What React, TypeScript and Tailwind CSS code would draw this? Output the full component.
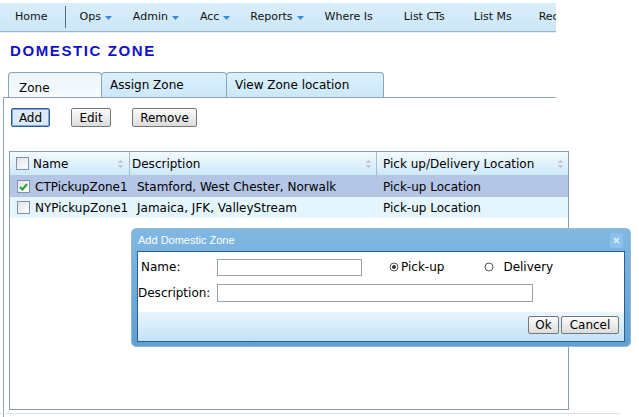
import React from 'react';

// ----------------------------------------------------------------------------
// Small drawings
// ----------------------------------------------------------------------------

const Caret = () => (
  <svg width="7" height="4" viewBox="0 0 7 4" className="ml-[4px] mt-[2px] shrink-0">
    <path d="M0 0 H7 L3.5 4 Z" fill="#3a8bd0" />
  </svg>
);

const SortIcon = () => (
  <svg width="7" height="10" viewBox="0 0 7 10" className="shrink-0">
    <path d="M3.5 0.5 L6.5 4 H0.5 Z" fill="#c3ccd5" />
    <path d="M3.5 9.5 L6.5 6 H0.5 Z" fill="#c3ccd5" />
  </svg>
);

const CheckBox = ({ checked }: { checked?: boolean }) => (
  <span className="flex h-[13px] w-[13px] shrink-0 items-center justify-center border border-[#7b94ad] bg-gradient-to-br from-[#dfe2e7] to-white">
    {checked && (
      <svg width="9" height="8" viewBox="0 0 9 8">
        <path d="M1 4 L3.5 6.5 L8 1.2" stroke="#22a122" strokeWidth="2" fill="none" />
      </svg>
    )}
  </span>
);

const Radio = ({ checked }: { checked?: boolean }) => (
  <svg width="10" height="10" viewBox="0 0 10 10" className="shrink-0">
    <circle cx="5" cy="5" r="4" fill="#fff" stroke="#555" strokeWidth="1" />
    {checked && <circle cx="5" cy="5" r="2" fill="#333" />}
  </svg>
);

// ----------------------------------------------------------------------------
// Menu bar
// ----------------------------------------------------------------------------

const navItems = [
  { label: 'Ops', caret: true, ml: 'ml-[13px]' },
  { label: 'Admin', caret: true, ml: 'ml-[21px]' },
  { label: 'Acc', caret: true, ml: 'ml-[21px]' },
  { label: 'Reports', caret: true, ml: 'ml-[20px]' },
  { label: 'Where Is', caret: false, ml: 'ml-[21px]' },
  { label: 'List CTs', caret: false, ml: 'ml-[31px]' },
  { label: 'List Ms', caret: false, ml: 'ml-[29px]' },
  { label: 'Rec', caret: false, ml: 'ml-[27px]' },
];

const NavBar = () => (
  <div className="mt-[3px] w-[556px] shrink-0">
    <div className="flex h-[29px] items-center overflow-hidden whitespace-nowrap border-b border-[#9db4c7] bg-gradient-to-b from-[#d9eefb] to-[#cbe7f8] pl-[15px] text-[11px] text-[#111]">
      <span>Home</span>
      <span className="ml-[18px] h-[22px] w-px shrink-0 bg-[#5b6976]" />
      {navItems.map((item) => (
        <span key={item.label} className={`flex shrink-0 items-center ${item.ml}`}>
          {item.label}
          {item.caret && <Caret />}
        </span>
      ))}
    </div>
    <div className="h-px bg-[#e4f1f9]" />
  </div>
);

// ----------------------------------------------------------------------------
// Grid
// ----------------------------------------------------------------------------

const rows = [
  { name: 'CTPickupZone1', desc: 'Stamford, West Chester, Norwalk', loc: 'Pick-up Location', selected: true },
  { name: 'NYPickupZone1', desc: 'Jamaica, JFK, ValleyStream', loc: 'Pick-up Location', selected: false },
];

const ZoneGrid = () => (
  <div className="ml-[5px] mt-[24px] h-[259px] w-[560px] shrink-0 border border-[#8d9dab] bg-white text-[12px]">
    <div className="flex h-[24px] border-b border-[#b3c9da] bg-gradient-to-b from-[#f4fbfe] to-[#cde8f9]">
      <div className="flex w-[120px] items-center border-r border-[#a7bccc] pl-[6px] pr-[5px]">
        <CheckBox />
        <span className="ml-[4px]">Name</span>
        <span className="ml-auto">
          <SortIcon />
        </span>
      </div>
      <div className="flex w-[247px] items-center border-r border-[#a7bccc] pl-[2px] pr-[4px]">
        <span>Description</span>
        <span className="ml-auto">
          <SortIcon />
        </span>
      </div>
      <div className="flex flex-1 items-center pl-[6px] pr-[4px]">
        <span>Pick up/Delivery Location</span>
        <span className="ml-auto">
          <SortIcon />
        </span>
      </div>
    </div>

    {rows.map((row) => (
      <div
        key={row.name}
        className={`flex h-[21px] items-center whitespace-nowrap ${row.selected ? 'bg-[#b4c5e6]' : 'bg-[#e4f5fd]'}`}
      >
        <div className="flex w-[120px] items-center pl-[7px]">
          <CheckBox checked={row.selected} />
          <span className="ml-[5px]">{row.name}</span>
        </div>
        <div className="w-[247px] pl-[7px]">{row.desc}</div>
        <div className="flex-1 pl-[6px]">{row.loc}</div>
      </div>
    ))}
  </div>
);

// ----------------------------------------------------------------------------
// Dialog
// ----------------------------------------------------------------------------

const GreyButton = ({ children, className }: { children: React.ReactNode; className: string }) => (
  <button
    className={`flex items-center justify-center rounded-[2px] border border-[#767676] bg-gradient-to-b from-[#fcfcfc] to-[#dcdcdc] text-[12px] leading-none text-black ${className}`}
  >
    {children}
  </button>
);

const AddZoneDialog = () => (
  <div className="absolute left-[131px] top-[228px] flex h-[119px] w-[500px] flex-col rounded-[5px] border border-[#9cb8d0] bg-gradient-to-b from-[#80b8e2] to-[#5f9fd3] px-[5px] pb-[4px]">
    <div className="flex h-[22px] shrink-0 items-center justify-between pl-[1px] pr-[2px]">
      <span className="font-['Liberation_Sans',Arial,sans-serif] text-[11px] text-white">Add Domestic Zone</span>
      <span className="flex h-[15px] w-[13px] items-center justify-center rounded-[2px] bg-[#8cc2ea]">
        <svg width="7" height="7" viewBox="0 0 7 7">
          <path d="M1 1 L6 6 M6 1 L1 6" stroke="#e8f4fc" strokeWidth="1.3" />
        </svg>
      </span>
    </div>
    <div className="flex flex-1 flex-col border border-[#2c5d91] bg-white text-[12px]">
      <div className="flex flex-1 flex-col gap-[8px] pt-[6px]">
        <div className="flex items-center">
          <span className="w-[79px] pl-[3px]">Name:</span>
          <span className="h-[17px] w-[145px] border border-[#98a2ab] bg-white" />
          <span className="ml-[27px] flex items-center">
            <Radio checked />
            <span className="ml-[2px]">Pick-up</span>
          </span>
          <span className="ml-[40px] flex items-center">
            <Radio />
            <span className="ml-[9px]">Delivery</span>
          </span>
        </div>
        <div className="flex items-center">
          <span className="w-[79px]">Description:</span>
          <span className="h-[18px] w-[316px] border border-[#98a2ab] bg-white" />
        </div>
      </div>
      <div className="flex h-[29px] shrink-0 items-start justify-end gap-[2px] bg-gradient-to-b from-[#e9f6fd] to-[#c2e2f7] pr-[5px] pt-[4px]">
        <GreyButton className="h-[18px] w-[31px]">Ok</GreyButton>
        <GreyButton className="h-[18px] w-[58px]">Cancel</GreyButton>
      </div>
    </div>
  </div>
);

// ----------------------------------------------------------------------------
// Page
// ----------------------------------------------------------------------------

export default function App() {
  return (
    <div className="relative flex h-[417px] w-[639px] flex-col overflow-hidden bg-white font-['DejaVu_Sans',Verdana,sans-serif] text-black">
      <NavBar />

      <h1 className="mt-[9px] h-[18px] shrink-0 pl-[10px] font-['Liberation_Sans',Arial,sans-serif] text-[15px] font-bold leading-[18px] tracking-[1.6px] text-[#1111cc]">
        DOMESTIC ZONE
      </h1>

      {/* Tabs */}
      <div className="mt-[12px] flex h-[25px] shrink-0 pl-[8px] text-[12px]">
        <div className="h-[25px] w-[94px] rounded-t-[4px] border border-b-0 border-[#8fa3b3] bg-gradient-to-b from-[#eaf6fe] to-[#f7fbfe] pl-[10px] pt-[6px]">
          Zone
        </div>
        <div className="-ml-px h-[25px] w-[126px] rounded-t-[4px] border border-b-0 border-[#8fa3b3] bg-gradient-to-b from-[#dcf0fc] to-[#cbe8f9] pl-[8px] pt-[3px]">
          Assign Zone
        </div>
        <div className="-ml-px h-[25px] w-[158px] rounded-t-[4px] border border-b-0 border-[#8fa3b3] bg-gradient-to-b from-[#dcf0fc] to-[#cbe8f9] pl-[8px] pt-[3px]">
          View Zone location
        </div>
      </div>

      {/* Tab panel */}
      <div className="ml-[3px] flex w-[553px] flex-1 flex-col border-l border-t border-[#8fa3b3]">
        <div className="flex shrink-0 pl-[7px] pt-[10px]">
          <button className="flex h-[19px] w-[39px] items-center justify-center rounded-[2px] border border-[#2d5f9a] bg-[#dce9f6] text-[12px] leading-none shadow-[inset_0_0_0_1px_#7fa7d6]">
            Add
          </button>
          <GreyButton className="ml-[21px] h-[19px] w-[40px]">Edit</GreyButton>
          <GreyButton className="ml-[21px] h-[19px] w-[65px]">Remove</GreyButton>
        </div>

        <ZoneGrid />
        <div className="-ml-[4px] mt-[3px] h-px w-[620px] shrink-0 bg-[#dde3e8]" />
      </div>

      <AddZoneDialog />
    </div>
  );
}
